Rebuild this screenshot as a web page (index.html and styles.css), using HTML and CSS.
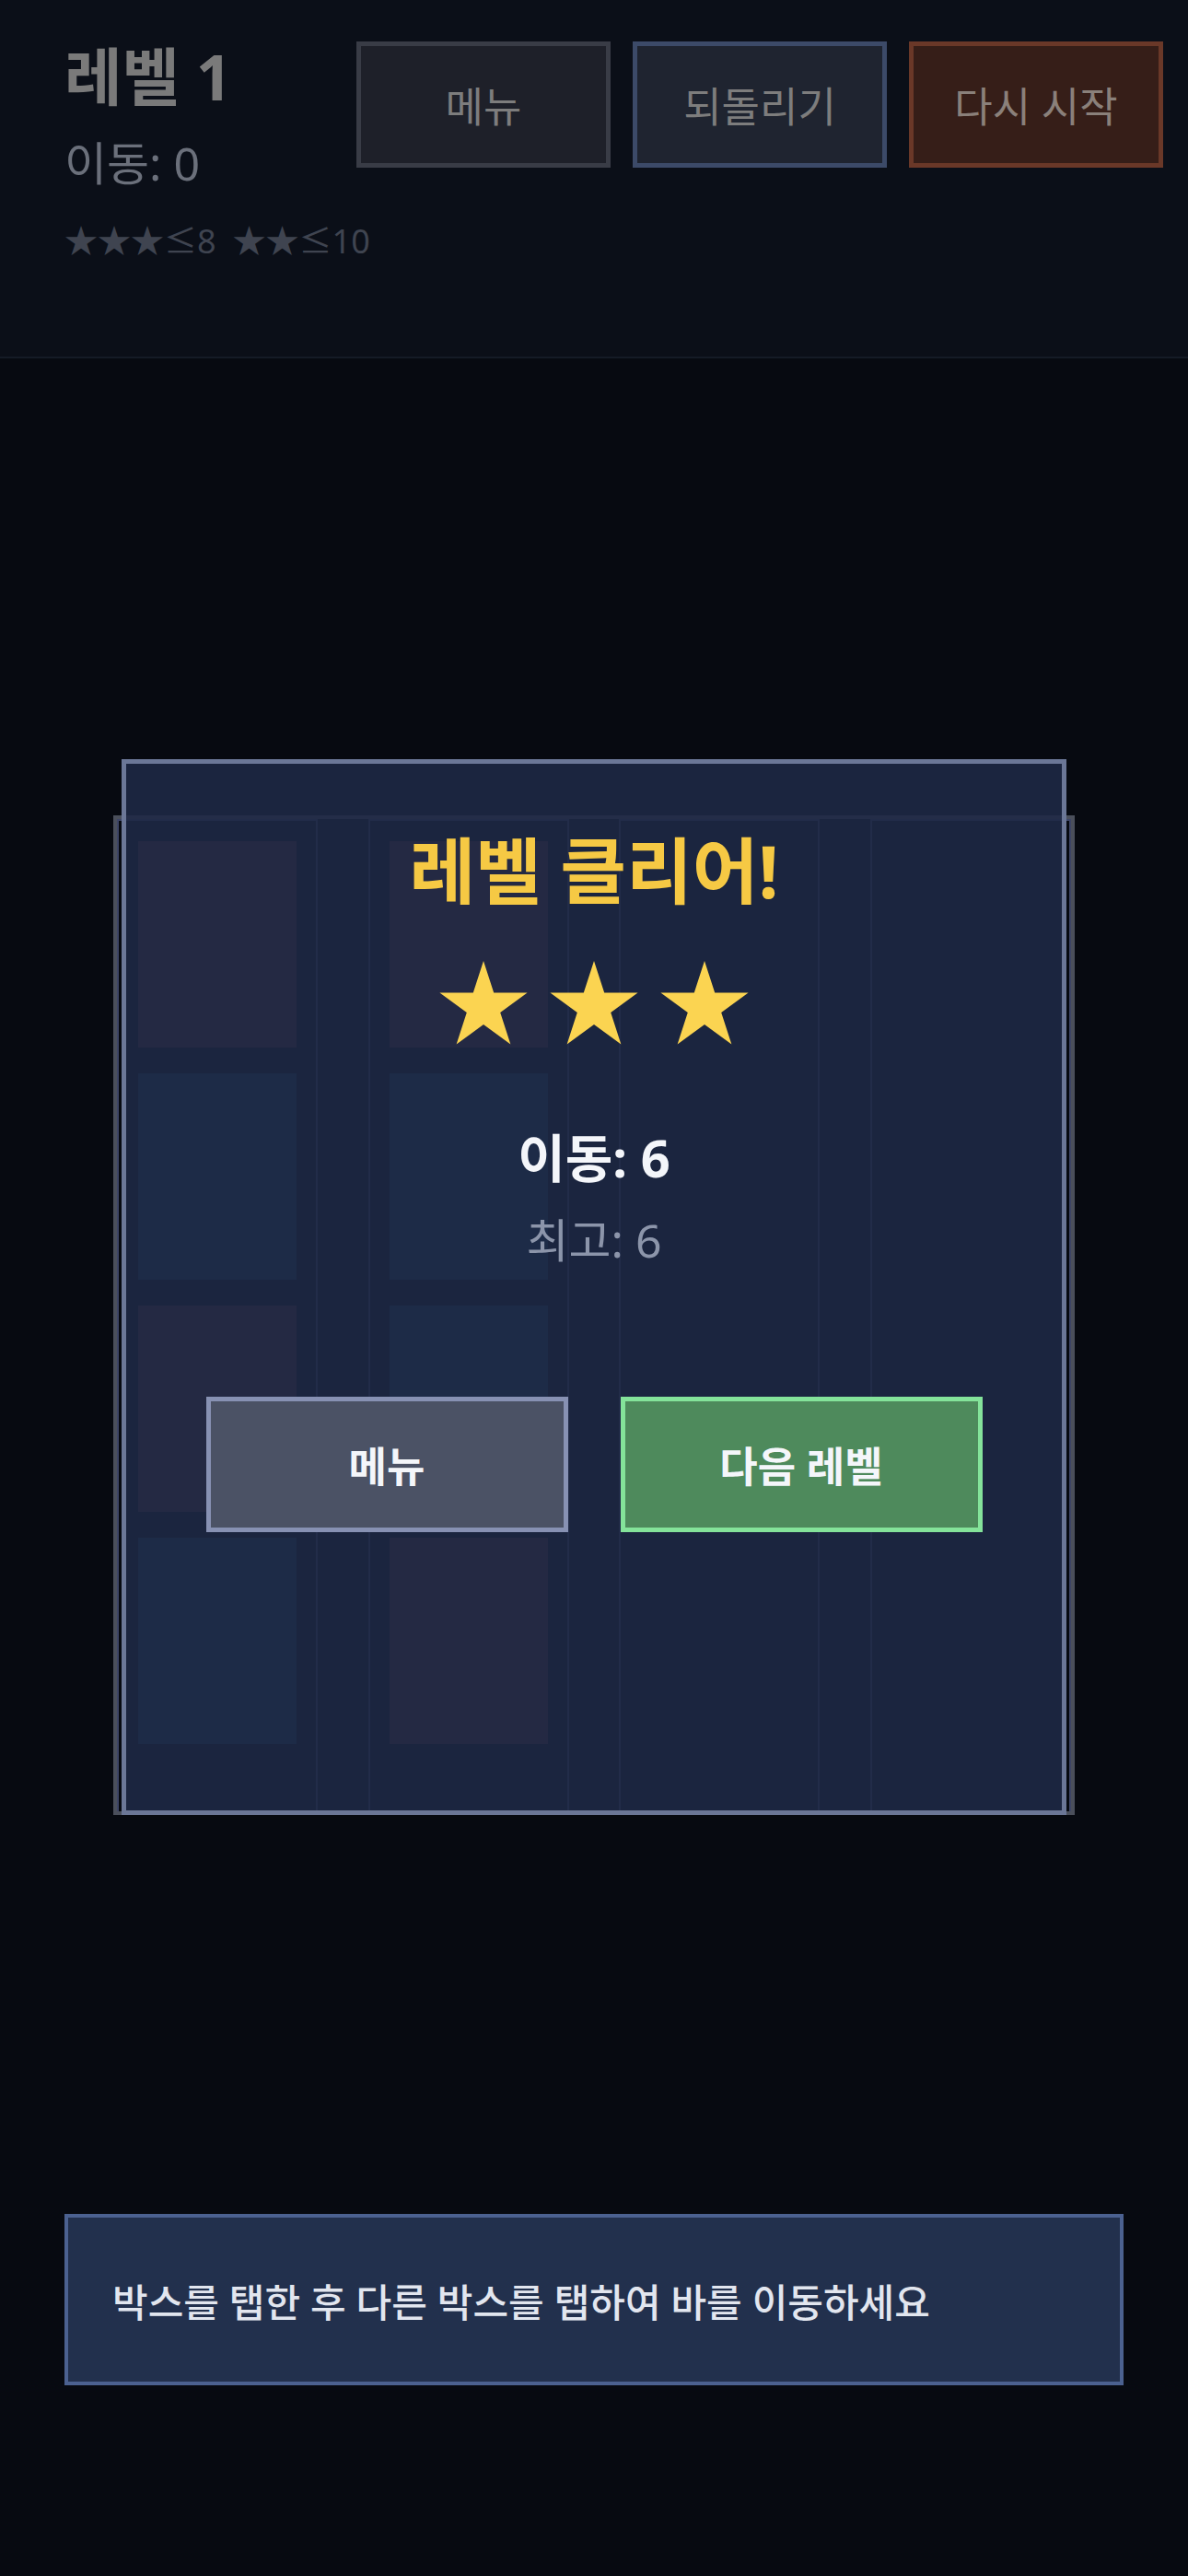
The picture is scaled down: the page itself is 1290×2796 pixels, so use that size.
FILE: index.html
```html
<!DOCTYPE html>
<html lang="ko">
<head>
  <meta charset="UTF-8" />
  <meta name="viewport" content="width=device-width, initial-scale=1.0"/>
  <title>바 정렬 퍼즐</title>
  <link rel="stylesheet" href="styles.css">
</head>
<body>
  <header class="topbar">
    <div class="info">
      <h1 class="level">레벨 1</h1>
      <div class="moves">이동: 0</div>
      <div class="goals">
        <span>★★★≤8</span>
        <span>★★≤10</span>
      </div>
    </div>
    <div class="actions">
      <button class="btn btn-menu">메뉴</button>
      <button class="btn btn-undo">되돌리기</button>
      <button class="btn btn-restart">다시 시작</button>
    </div>
  </header>

  <main class="stage">
    <div class="board-wrap">
      <div class="board">
        <div class="tube">
          <div class="box red"></div>
          <div class="box blue"></div>
          <div class="box red"></div>
          <div class="box blue"></div>
        </div>
        <div class="tube">
          <div class="box red"></div>
          <div class="box blue"></div>
          <div class="box navy"></div>
          <div class="box red"></div>
        </div>
        <div class="tube"></div>
        <div class="tube"></div>
      </div>

      <div class="modal">
        <h2 class="modal-title">레벨 클리어!</h2>
        <div class="stars">
          <svg viewBox="2 0 96 91"><polygon points="50,0 61.2,34.5 97.6,34.5 68.2,55.9 79.4,90.5 50,69.1 20.6,90.5 31.8,55.9 2.4,34.5 38.8,34.5"/></svg>
          <svg viewBox="2 0 96 91"><polygon points="50,0 61.2,34.5 97.6,34.5 68.2,55.9 79.4,90.5 50,69.1 20.6,90.5 31.8,55.9 2.4,34.5 38.8,34.5"/></svg>
          <svg viewBox="2 0 96 91"><polygon points="50,0 61.2,34.5 97.6,34.5 68.2,55.9 79.4,90.5 50,69.1 20.6,90.5 31.8,55.9 2.4,34.5 38.8,34.5"/></svg>
        </div>
        <div class="result">이동: 6</div>
        <div class="best">최고: 6</div>
        <div class="modal-actions">
          <button class="mbtn mbtn-menu">메뉴</button>
          <button class="mbtn mbtn-next">다음 레벨</button>
        </div>
      </div>
    </div>

    <div class="hint">박스를 탭한 후 다른 박스를 탭하여 바를 이동하세요</div>
  </main>
</body>
</html>
```

FILE: styles.css
```css
body {
  margin: 0;
  background: #070a11;
  font-family: "Noto Sans", "Noto Sans CJK KR", sans-serif;
  height: 2796px;
}

.topbar {
  display: flex;
  align-items: flex-start;
  height: 389px;
  box-sizing: border-box;
  padding: 42px 27px 0 70px;
  background: #0b0f18;
  border-bottom: 2px solid #151b26;
}

.info {
  flex: 1;
  min-width: 0;
  white-space: nowrap;
}

.level {
  margin: 0;
  font-size: 68px;
  line-height: 1.2;
  font-weight: 700;
  color: #7a7a7a;
}

.moves {
  margin-top: 23px;
  font-size: 50px;
  line-height: 1.2;
  color: #6b707b;
}

.goals {
  display: flex;
  gap: 18px;
  margin-top: 33px;
  font-size: 36px;
  line-height: 1.2;
  color: #3f4450;
}

.actions {
  display: flex;
  flex-shrink: 0;
  gap: 24px;
  margin-top: 3px;
}

.btn {
  width: 276px;
  height: 137px;
  box-sizing: border-box;
  border: 5px solid;
  font-family: inherit;
  font-size: 45px;
  color: #7d7d7d;
}

.btn-menu {
  background: #1e2029;
  border-color: #393c46;
}

.btn-undo {
  background: #1f2430;
  border-color: #3c4a68;
}

.btn-restart {
  background: #361e18;
  border-color: #6a3828;
  color: #8a807a;
}

.stage {
  padding-top: 496px;
}

.board-wrap {
  position: relative;
  width: 1044px;
  margin: 0 auto;
}

.board {
  display: flex;
  justify-content: space-between;
  height: 1085px;
  box-sizing: border-box;
  border: 4px solid #4a4f5b;
}

.tube {
  width: 218px;
  box-sizing: border-box;
  border: 2px solid #3d4566;
  border-bottom: 0;
  padding: 22px 21px;
  display: flex;
  flex-direction: column;
  gap: 28px;
}

.box {
  height: 224px;
}

.red {
  background: #4a2a34;
}

.blue {
  background: #143c55;
}

.navy {
  background: #143a52;
}

.modal {
  position: absolute;
  top: -61px;
  left: 9px;
  right: 9px;
  bottom: 0;
  box-sizing: border-box;
  border: 5px solid #6b7797;
  background: rgba(31, 41, 70, 0.88);
  padding-top: 70px;
  text-align: center;
}

.modal-title {
  margin: 0;
  font-size: 78px;
  line-height: 1.2;
  font-weight: 700;
  color: #f6c944;
}

.stars {
  display: flex;
  justify-content: center;
  gap: 24px;
  margin-top: 50px;
}

.stars svg {
  width: 96px;
  height: 91px;
  fill: #fbd451;
}

.result {
  margin-top: 89px;
  font-size: 56px;
  line-height: 1.2;
  font-weight: 700;
  color: #f4f6fa;
}

.best {
  margin-top: 26px;
  font-size: 50px;
  line-height: 1.2;
  color: #8c95aa;
}

.modal-actions {
  display: flex;
  justify-content: center;
  gap: 57px;
  margin-top: 140px;
}

.mbtn {
  width: 393px;
  height: 147px;
  box-sizing: border-box;
  border: 5px solid;
  font-family: inherit;
  font-size: 45px;
  font-weight: 700;
  color: #f4f6fa;
}

.mbtn-menu {
  background: #4b5265;
  border-color: #8791b3;
}

.mbtn-next {
  background: #4e8a5c;
  border-color: #84e39a;
}

.hint {
  display: flex;
  align-items: center;
  height: 186px;
  box-sizing: border-box;
  margin: 433px 70px 0;
  padding-left: 48px;
  border: 4px solid #4b6190;
  background: #22304d;
  font-size: 42px;
  font-weight: 500;
  color: #e2e6ef;
}
```
